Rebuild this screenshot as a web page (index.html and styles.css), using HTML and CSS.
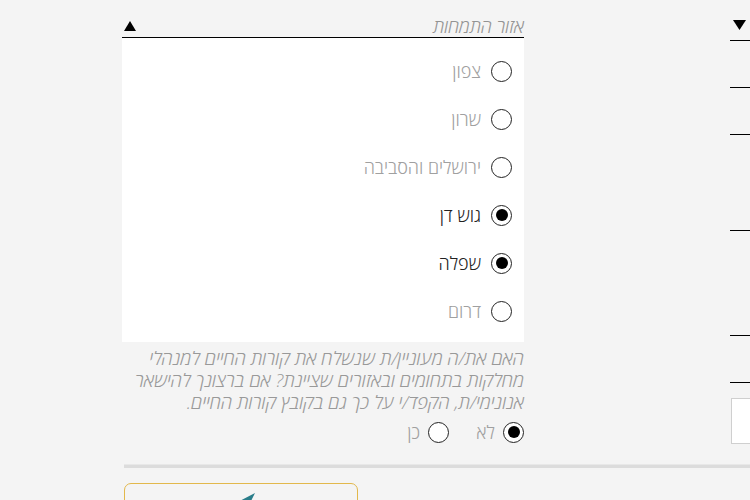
FILE: index.html
```html
<!DOCTYPE html>
<html lang="he">
<head>
<meta charset="utf-8">
<link rel="stylesheet" href="styles.css">
</head>
<body>
<div class="page">
  <div class="columns">
    <div class="col-main" dir="rtl">
      <div class="select-head">
        <span class="select-label">אזור התמחות</span>
        <svg class="arrow" width="12" height="10" viewBox="0 0 12 10"><polygon points="6,0 12,10 0,10" fill="#000"/></svg>
      </div>
      <div class="panel">
        <div class="opt"><span class="radio"></span><span class="opt-text">צפון</span></div>
        <div class="opt"><span class="radio"></span><span class="opt-text">שרון</span></div>
        <div class="opt"><span class="radio"></span><span class="opt-text">ירושלים והסביבה</span></div>
        <div class="opt on"><span class="radio"></span><span class="opt-text">גוש דן</span></div>
        <div class="opt on"><span class="radio"></span><span class="opt-text">שפלה</span></div>
        <div class="opt"><span class="radio"></span><span class="opt-text">דרום</span></div>
      </div>
      <p class="question">האם את/ה מעוניין/ת שנשלח את קורות החיים למנהלי מחלקות בתחומים ובאזורים שציינת? אם ברצונך להישאר אנונימי/ת, הקפד/י על כך גם בקובץ קורות החיים.</p>
      <div class="yesno">
        <div class="yn on"><span class="radio"></span><span class="yn-text">לא</span></div>
        <div class="yn"><span class="radio"></span><span class="yn-text">כן</span></div>
      </div>
    </div>
    <div class="col-side">
      <div class="side-f f1"><svg class="arrow" width="13" height="10" viewBox="0 0 13 10"><polygon points="0,0 13,0 6.5,10" fill="#000"/></svg></div>
      <div class="side-f f2"></div>
      <div class="side-f f3"></div>
      <div class="side-f f4"></div>
      <div class="side-f f5"></div>
      <div class="side-f f6"></div>
      <div class="side-box"></div>
    </div>
  </div>
  <div class="footer">
    <div class="divider"></div>
    <div class="send-btn">
      <svg class="send-ico" width="24" height="22" viewBox="0 0 24 22"><polygon points="23,0 0,12 9,14 12,22" fill="#2a7d8a"/></svg>
    </div>
  </div>
</div>
</body>
</html>
```

FILE: styles.css
```css
html, body {
  margin: 0;
  padding: 0;
  background: #f4f4f4;
  overflow: hidden;
  width: 750px;
  height: 500px;
}
.page {
  font-family: "Open Sans", "Liberation Sans", "DejaVu Sans", sans-serif;
  width: 750px;
  height: 500px;
  overflow: hidden;
}
.columns {
  display: flex;
  padding-left: 122px;
}
.col-main {
  width: 402px;
  flex: none;
}
.select-head {
  display: flex;
  align-items: center;
  justify-content: space-between;
  padding-top: 14px;
  height: 23px;
  border-bottom: 1px solid #000;
  padding-left: 2px;
}
.select-label {
  font-size: 18px;
  font-style: italic;
  font-weight: 300;
  color: #939393;
  line-height: 24px;
}
.select-head .arrow {
  margin-top: 0;
}
.panel {
  background: #fff;
  padding: 9px 12px 7px 0;
}
.opt {
  display: flex;
  align-items: center;
  height: 48px;
  gap: 10px;
}
.radio {
  width: 19px;
  height: 19px;
  border: 1.5px solid #222;
  border-radius: 50%;
  background: #fff;
  flex: none;
  position: relative;
}
.on .radio::after {
  content: "";
  position: absolute;
  left: 3.5px;
  top: 3.5px;
  width: 12px;
  height: 12px;
  border-radius: 50%;
  background: #000;
}
.opt-text {
  font-size: 18px;
  color: #a0a0a0;
  line-height: 24px;
  font-weight: 300;
}
.opt.on .opt-text {
  color: #222;
  font-weight: 300;
}
.question {
  margin: 5px 0 0 0;
  padding-left: 10px;
  font-size: 18.6px;
  font-style: italic;
  font-weight: 300;
  line-height: 22px;
  color: #999;
}
.yesno {
  display: flex;
  margin-top: 7px;
  height: 24px;
  align-items: center;
  gap: 26px;
}
.yn {
  display: flex;
  align-items: center;
  gap: 8px;
}
.yn-text {
  font-size: 18px;
  color: #a0a0a0;
  font-weight: 300;
  line-height: 24px;
  min-width: 20px;
}
.col-side {
  margin-left: 206px;
  width: 300px;
  flex: none;
  display: flex;
  flex-direction: column;
}
.side-f {
  border-bottom: 1px solid #000;
  flex: none;
}
.f1 { height: 40px; display: flex; align-items: flex-start; }
.f1 .arrow { margin: 20px 0 0 3px; }
.f2 { height: 46px; }
.f3 { height: 46px; }
.f4 { height: 95px; }
.f5 { height: 104px; }
.f6 { height: 46px; }
.side-box {
  margin-top: 15px;
  margin-left: 1px;
  height: 44px;
  background: #fff;
  border: 1px solid #cfcfcf;
}
.footer {
  padding-left: 124px;
  padding-top: 20px;
}
.divider {
  height: 3px;
  background: #dcdcdc;
  border-top: 1px solid #e8e8e8;
}
.send-btn {
  margin-top: 15px;
  width: 234px;
  height: 40px;
  border: 1.5px solid #e2b84c;
  border-radius: 7px;
  display: flex;
  justify-content: center;
  padding-top: 9px;
  box-sizing: border-box;
}
.send-ico {
  flex: none;
  margin-left: 6px;
}
```
